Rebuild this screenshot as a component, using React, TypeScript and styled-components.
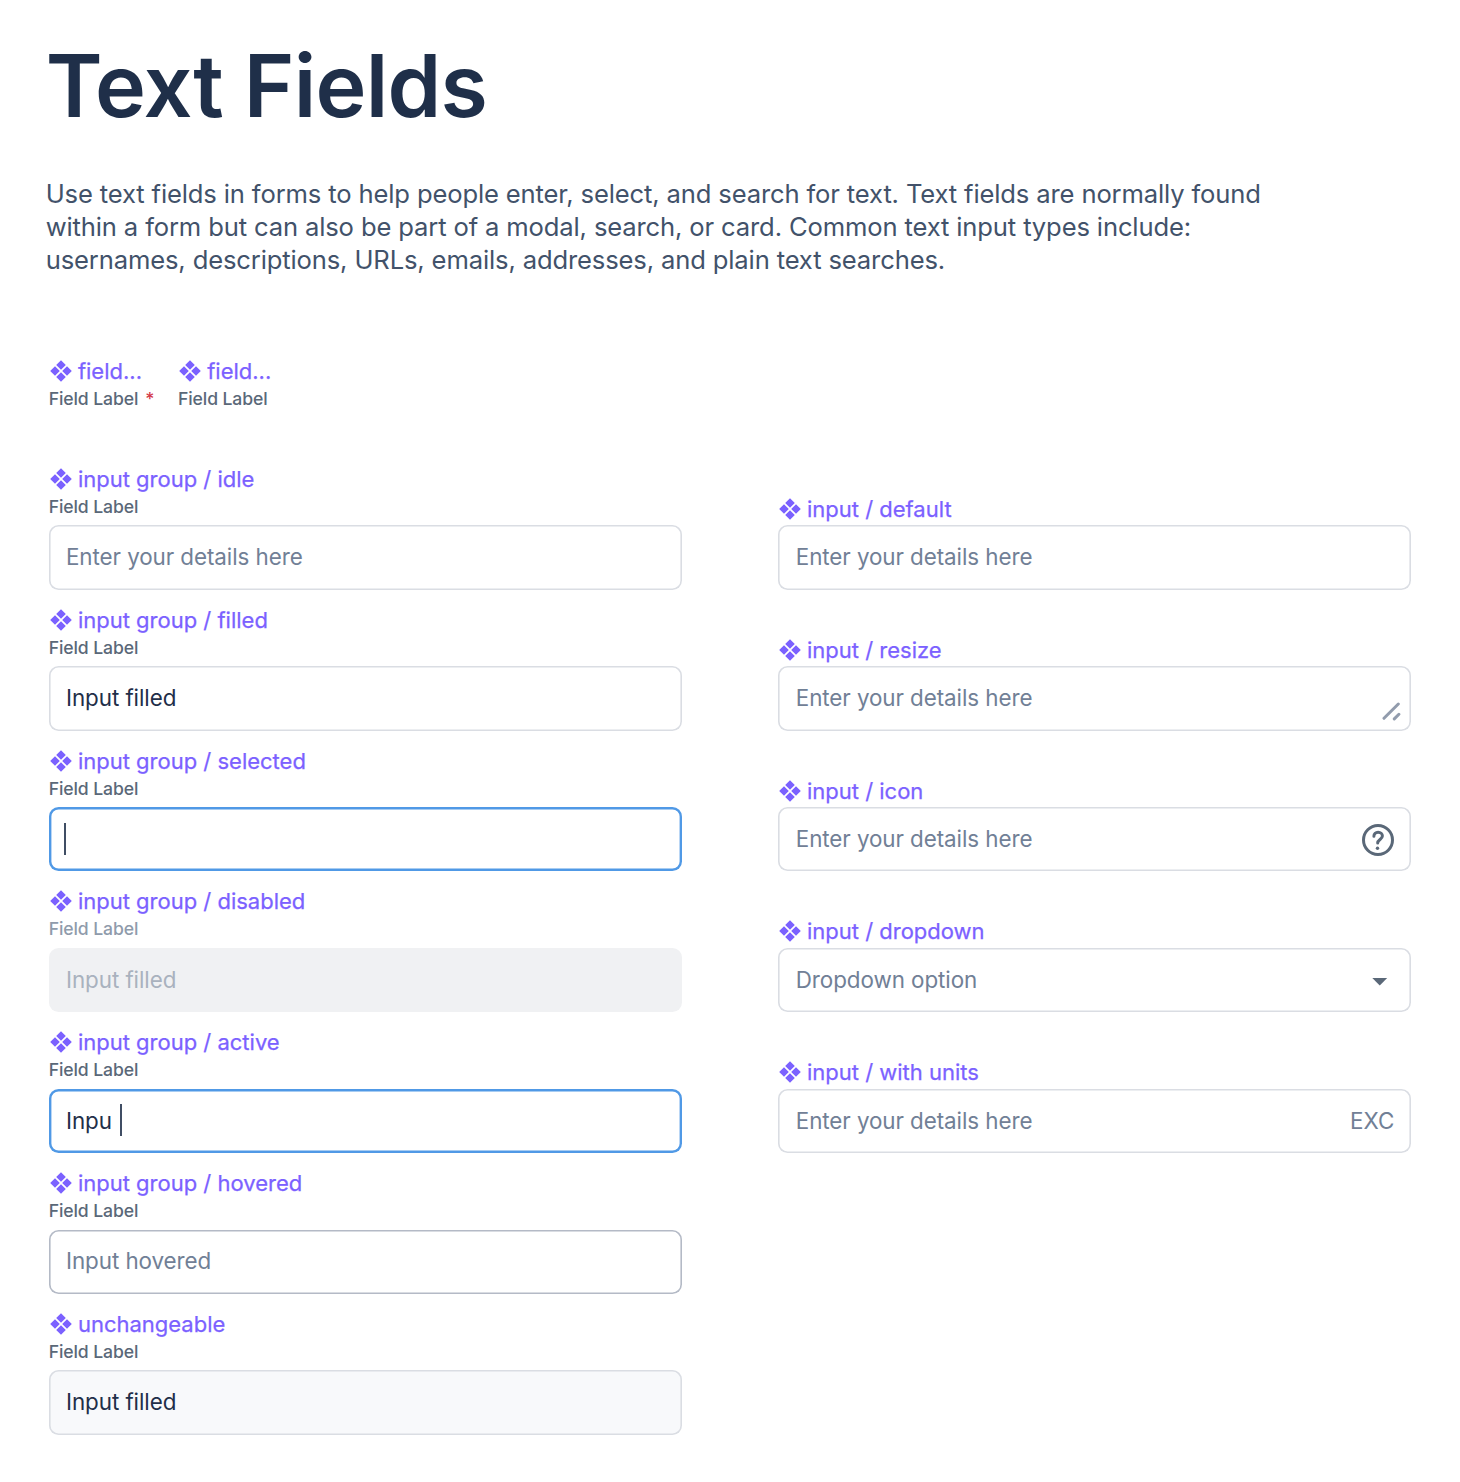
import React from "react";
import styled, { createGlobalStyle } from "styled-components";

const GlobalStyle = createGlobalStyle`
  body {
    margin: 0;
    background: #ffffff;
    font-family: Inter, "Liberation Sans", sans-serif;
  }
`;

const Page = styled.main`
  box-sizing: border-box;
  width: 1460px;
  height: 1482px;
  padding: 34px 48px 0 48.7px;
  overflow: hidden;
`;

const Title = styled.h1`
  margin: 0 0 0 -3px;
  font-size: 86.2px;
  line-height: 104px;
  font-weight: 600;
  letter-spacing: -0.75px;
  color: #1f2f49;
`;

const Intro = styled.p`
  margin: 39px 0 0 -3px;
  height: 99.9px;
  font-size: 25.6px;
  line-height: 33.1px;
  letter-spacing: -0.142px;
  color: #42526a;
  white-space: nowrap;
`;

const LabelSamples = styled.div`
  display: flex;
  gap: 24.3px;
  margin-top: 81px;
`;

const LabelSample = styled.div`
  width: 105px;
`;

const Columns = styled.div`
  display: grid;
  grid-template-columns: 633px 633px;
  column-gap: 96.8px;
  align-items: start;
  margin-top: 54px;
`;

const Column = styled.section<{ $offset?: number }>`
  display: grid;
  grid-auto-rows: 140.85px;
  padding-top: ${(p) => p.$offset ?? 0}px;
`;

const Tag = styled.div<{ $tight?: boolean }>`
  display: flex;
  align-items: center;
  gap: ${(p) => (p.$tight ? 5.7 : 6.1)}px;
  height: 26px;
  padding-left: ${(p) => (p.$tight ? 0.8 : 1.1)}px;
  font-size: 22px;
  line-height: 26px;
  font-weight: 400;
  color: #7b61ff;
  -webkit-text-stroke: 0.25px #7b61ff;
  white-space: nowrap;
`;

const Label = styled.div<{ $muted?: boolean }>`
  height: 28px;
  line-height: 30px;
  font-size: 17.6px;
  font-weight: 500;
  letter-spacing: -0.1px;
  color: ${(p) => (p.$muted ? "#8f9bab" : "#5a6878")};
  white-space: nowrap;
`;

const Required = styled.span`
  margin-left: 7px;
  color: #d3384a;
`;

type State = "idle" | "focus" | "hover" | "disabled" | "locked";

const outline: Record<State, string> = {
  idle: "inset 0 0 0 1.6px #dadde3",
  focus: "inset 0 0 0 2.4px #5099e6",
  hover: "inset 0 0 0 1.6px #b4bac6",
  disabled: "none",
  locked: "inset 0 0 0 1.6px #dadde3",
};

const fill: Record<State, string> = {
  idle: "#ffffff",
  focus: "#ffffff",
  hover: "#ffffff",
  disabled: "#f0f1f3",
  locked: "#f8f9fb",
};

const Field = styled.div<{ $state: State; $gap: number }>`
  box-sizing: border-box;
  display: flex;
  align-items: center;
  height: 64.4px;
  margin-top: ${(p) => p.$gap}px;
  padding: 0 17.3px;
  border-radius: 9.6px;
  background: ${(p) => fill[p.$state]};
  box-shadow: ${(p) => outline[p.$state]};
`;

type Tone = "placeholder" | "value" | "disabled";

const tones: Record<Tone, string> = {
  placeholder: "#718096",
  value: "#1f2f49",
  disabled: "#a9b2be",
};

const Value = styled.span<{ $tone: Tone }>`
  margin-top: -0.8px;
  font-size: 22.4px;
  line-height: 32px;
  letter-spacing: -0.07px;
  color: ${(p) => tones[p.$tone]};
  white-space: pre;
`;

const Caret = styled.span<{ $before: number }>`
  width: 2px;
  height: 32px;
  margin-left: ${(p) => p.$before}px;
  margin-top: -1px;
  background: #1f2f49;
  opacity: 0.85;
`;

const Trailing = styled.span<{ $right?: number; $top?: number }>`
  display: flex;
  margin-left: auto;
  margin-right: ${(p) => p.$right ?? 0}px;
  margin-top: ${(p) => p.$top ?? 0}px;
`;

const ComponentIcon = () => (
  <svg width="22" height="22" viewBox="0 0 22 22" fill="#7b61ff">
    <path d="M11 0.2 15.8 5 11 9.8 6.2 5ZM17 6.2 21.8 11 17 15.8 12.2 11ZM11 12.2 15.8 17 11 21.8 6.2 17ZM5 6.2 9.8 11 5 15.8 0.2 11Z" />
  </svg>
);

const ResizeIcon = () => (
  <svg width="19" height="19" viewBox="0 0 19 19" fill="none" stroke="#929cad" strokeWidth="3" strokeLinecap="round">
    <path d="M2 16.3 16.3 2M12.3 16.9 16.9 12.3" />
  </svg>
);

const HelpIcon = () => (
  <svg width="32" height="32" viewBox="0 0 32 32" fill="none" stroke="#5a6878" strokeWidth="3" strokeLinecap="round" strokeLinejoin="round">
    <circle cx="16" cy="16" r="14.5" />
    <path d="M11.9 12.2C11.9 9.8 13.7 8.2 16.1 8.2C18.6 8.2 20.4 9.9 20.4 12.1C20.4 15.2 15.7 15.8 15.7 18.9" />
    <circle cx="15.5" cy="24.2" r="1.7" fill="#5a6878" stroke="none" />
  </svg>
);

const ArrowIcon = () => (
  <svg width="16" height="8" viewBox="0 0 16 8" fill="#5a6878">
    <path d="M0.3 0H15.2L7.75 7.6Z" />
  </svg>
);

const ComponentTag = ({ children, tight }: { children: React.ReactNode; tight?: boolean }) => (
  <Tag $tight={tight}>
    <ComponentIcon />
    <span>{children}</span>
  </Tag>
);

interface Group {
  name: string;
  state: State;
  text?: string;
  tone?: Tone;
  caret?: number;
}

const groups: Group[] = [
  { name: "input group / idle", state: "idle", text: "Enter your details here", tone: "placeholder" },
  { name: "input group / filled", state: "idle", text: "Input filled", tone: "value" },
  { name: "input group / selected", state: "focus", caret: -2 },
  { name: "input group / disabled", state: "disabled", text: "Input filled", tone: "disabled" },
  { name: "input group / active", state: "focus", text: "Inpu", tone: "value", caret: 8 },
  { name: "input group / hovered", state: "hover", text: "Input hovered", tone: "placeholder" },
  { name: "unchangeable", state: "locked", text: "Input filled", tone: "value" },
];

const inputs: { name: string; text: string; trailing?: React.ReactNode }[] = [
  { name: "input / default", text: "Enter your details here" },
  { name: "input / resize", text: "Enter your details here", trailing: <Trailing $right={-7} $top={26.4}><ResizeIcon /></Trailing> },
  { name: "input / icon", text: "Enter your details here", trailing: <Trailing $top={1.6}><HelpIcon /></Trailing> },
  { name: "input / dropdown", text: "Dropdown option", trailing: <Trailing $right={6} $top={3}><ArrowIcon /></Trailing> },
  { name: "input / with units", text: "Enter your details here", trailing: <Trailing><Value $tone="placeholder">EXC</Value></Trailing> },
];

export default function App() {
  return (
    <>
      <GlobalStyle />
      <Page>
        <Title>Text Fields</Title>
        <Intro>
          Use text fields in forms to help people enter, select, and search for text. Text fields are normally found
          <br />
          within a form but can also be part of a modal, search, or card. Common text input types include:
          <br />
          usernames, descriptions, URLs, emails, addresses, and plain text searches.
        </Intro>
        <LabelSamples>
          <LabelSample>
            <ComponentTag>field...</ComponentTag>
            <Label>Field Label<Required>*</Required></Label>
          </LabelSample>
          <LabelSample>
            <ComponentTag>field...</ComponentTag>
            <Label>Field Label</Label>
          </LabelSample>
        </LabelSamples>
        <Columns>
          <Column>
            {groups.map((g) => (
              <div key={g.name}>
                <ComponentTag>{g.name}</ComponentTag>
                <Label $muted={g.state === "disabled"}>Field Label</Label>
                <Field $state={g.state} $gap={5.5}>
                  {g.text && <Value $tone={g.tone ?? "value"}>{g.text}</Value>}
                  {g.caret !== undefined && <Caret $before={g.caret} />}
                </Field>
              </div>
            ))}
          </Column>
          <Column $offset={30}>
            {inputs.map((i) => (
              <div key={i.name}>
                <ComponentTag tight>{i.name}</ComponentTag>
                <Field $state="idle" $gap={3.5}>
                  <Value $tone="placeholder">{i.text}</Value>
                  {i.trailing}
                </Field>
              </div>
            ))}
          </Column>
        </Columns>
      </Page>
    </>
  );
}
